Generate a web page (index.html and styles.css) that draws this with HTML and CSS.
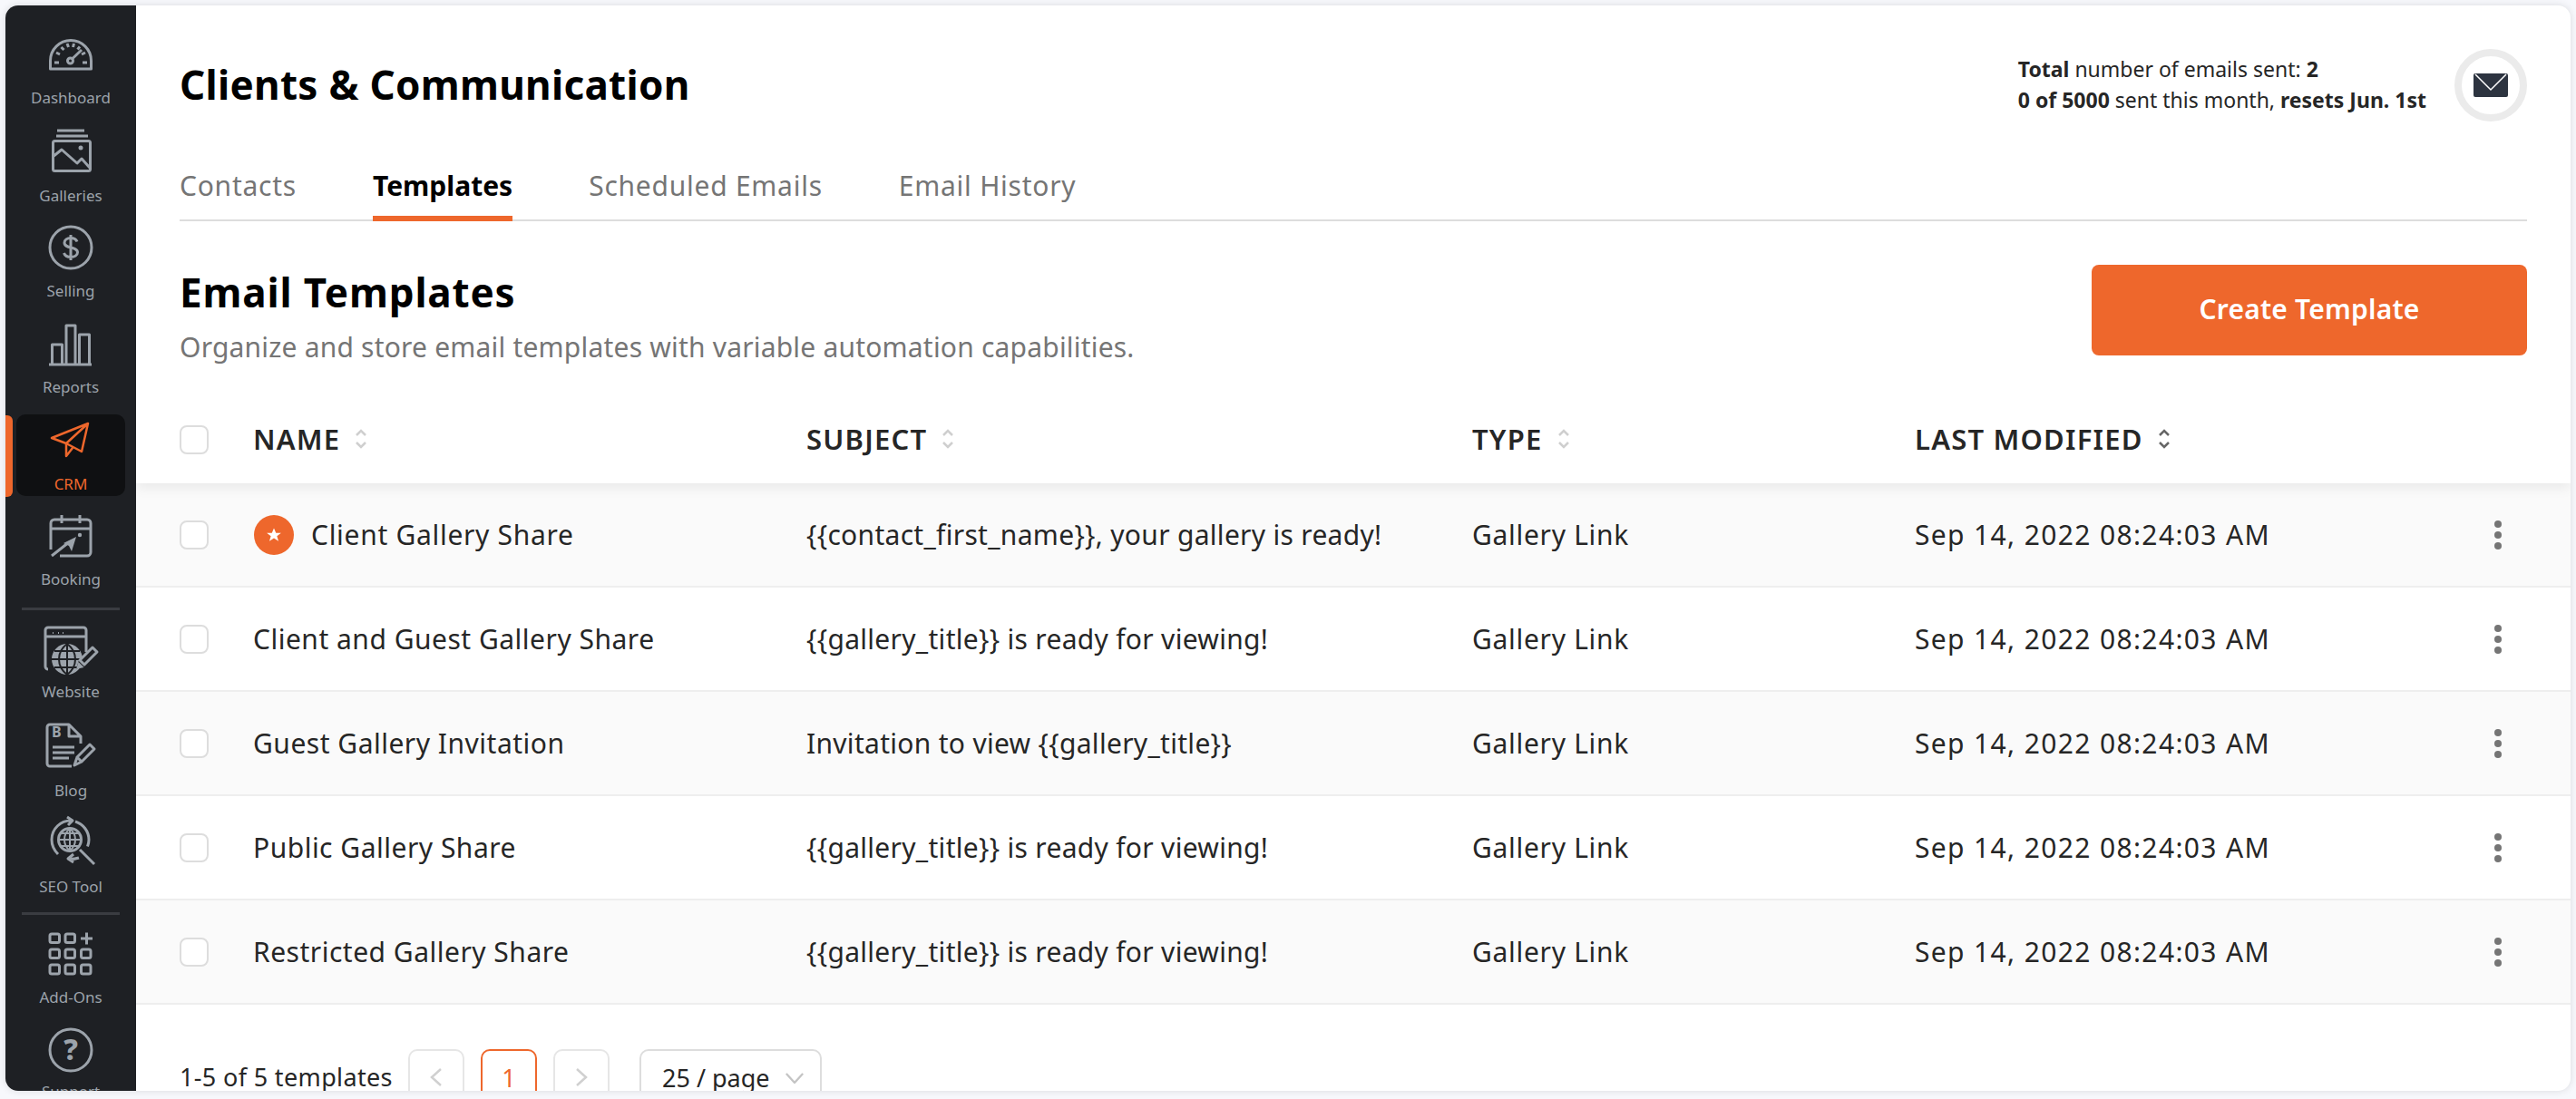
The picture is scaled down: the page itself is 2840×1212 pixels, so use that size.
FILE: index.html
```html
<!DOCTYPE html>
<html lang="en">
<head>
<meta charset="utf-8">
<title>Clients &amp; Communication</title>
<link rel="stylesheet" href="styles.css">
</head>
<body>
<div class="frame">
  <aside class="sidebar">
    <span class="active-bar"></span>
    <a class="nav nav-120">
      <svg class="ico" viewBox="0 0 60 60"><path d="M7.500 48V39a22.500 22.500 0 0 1 45 0v9z"/><path d="M12 41h5M43 41h5M14 30l4 2M19.500 24l3 3M26 20l1.500 4M33.500 20l-1 4M40 23.500l-2.500 3M46 30l-4 2"/><circle cx="29.500" cy="39" r="3"/><path d="M31.500 37L42 27"/></svg>
      <span class="nav-label">Dashboard</span>
    </a>
    <a class="nav nav-108">
      <svg class="ico" viewBox="0 0 60 60"><path d="M15 8h30M14 14h35"/><rect x="10.500" y="19.500" width="41" height="33" rx="2"/><path d="M10 37l10-8 17 15 5-5 9 10"/><circle class="solid" cx="41" cy="27" r="2.500"/></svg>
      <span class="nav-label">Galleries</span>
    </a>
    <a class="nav nav-105">
      <svg class="ico" viewBox="0 0 60 60"><circle cx="30" cy="32" r="23"/><path d="M37 25.500c-1-2.500-3.500-4-7-4-4 0-7 2.200-7 5.300 0 7 14.500 3.500 14.500 10.500 0 3.200-3.300 5.200-7.500 5.200-3.800 0-6.500-1.600-7.500-4.500M30 18v28"/></svg>
      <span class="nav-label">Selling</span>
    </a>
    <a class="nav nav-106">
      <svg class="ico" viewBox="0 0 60 60"><path d="M9.500 55V33h11v22M25 55V12h10v43M39.500 55V22h11v33M6 55h47"/></svg>
      <span class="nav-label">Reports</span>
    </a>
    <a class="nav nav-108 nav-active">
      <svg class="ico" viewBox="0 0 60 60"><path d="M49 13L9 29l16 6 17 9zM25 35L49 13M25 35v14l7-9"/></svg>
      <span class="nav-label">CRM</span>
    </a>
    <a class="nav nav-104">
      <svg class="ico" viewBox="0 0 60 60"><path d="M8 47V18a4 4 0 0 1 4-4h36a4 4 0 0 1 4 4v32a4 4 0 0 1-4 4H18M8 24h44M20 9v9M40 9v9M9 54l19-15"/><path class="solid" d="M36 33l-5 16-3-6-6-3z"/><circle class="solid" cx="40" cy="31" r="2.200"/></svg>
      <span class="nav-label">Booking</span>
    </a>
    <div class="nav-divider nav-divider-a"></div>
    <a class="nav nav-website">
      <svg class="ico" viewBox="0 0 60 60"><path d="M5 55h-0a3 3 0 0 1-3-3V12a3 3 0 0 1 3-3h39a3 3 0 0 1 3 3v24M2 19h45"/><path class="thin" d="M10 15h1M16 15h1M21 15h1"/><circle class="solid" cx="26" cy="44" r="17"/><path class="cut" d="M9 44h34M26 27v34M12 35h28M12 53h28M26 27c-12 9-12 25 0 34M26 27c12 9 12 25 0 34"/><path class="cut-fill" d="M36 55l3-10 15-15 6 6-15 15z"/><path class="solid" d="M36 55l2.500-8 6 6z"/><path class="pen" d="M40 45l14-14 5 5-14 14z"/></svg>
      <span class="nav-label">Website</span>
    </a>
    <a class="nav nav-109">
      <svg class="ico" viewBox="0 0 60 60"><path d="M31 53H7a3 3 0 0 1-3-3V10a3 3 0 0 1 3-3h21l13 13v8M28 7v13h13M10 32h24M10 38h24M10 44h18"/><path class="pen" d="M37 43l14-14 5 5-14 14zM37 43l-3 9 8-4"/><text class="blog-b" x="9" y="21">B</text></svg>
      <span class="nav-label">Blog</span>
    </a>
    <a class="nav nav-106">
      <svg class="ico" viewBox="0 0 60 60"><path d="M31 7a21 21 0 0 0-22 21c0 7 3 12 7 16M26 3l6 4-5 5M35 8c9 3 15 11 15 20 0 3-.5 5-1.500 7.500M39 48c-3 1-6 1.500-10 1.500l-1 0M33 44l-6 5 6 4M40 39l16 16"/><circle cx="29" cy="28" r="12.500"/><path class="thin" d="M17 28h24M29 16v24M19 21h20M19 35h20M29 16c-8 6-8 18 0 24M29 16c8 6 8 18 0 24"/></svg>
      <span class="nav-label">SEO Tool</span>
    </a>
    <div class="nav-divider nav-divider-b"></div>
    <a class="nav nav-addons">
      <svg class="ico" viewBox="0 0 60 60"><rect x="7" y="10" width="10.500" height="9.500" rx="2"/><rect x="24" y="10" width="10.500" height="9.500" rx="2"/><path d="M41 15h13M47.500 8.500v13"/><rect x="7" y="27" width="10.500" height="9.500" rx="2"/><rect x="24" y="27" width="10.500" height="9.500" rx="2"/><rect x="41.500" y="27" width="10.500" height="9.500" rx="2"/><rect x="7" y="44" width="10.500" height="10" rx="2"/><rect x="24" y="44" width="10.500" height="10" rx="2"/><rect x="41.500" y="44" width="10.500" height="10" rx="2"/></svg>
      <span class="nav-label">Add-Ons</span>
    </a>
    <a class="nav nav-104">
      <svg class="ico" viewBox="0 0 60 60"><circle cx="30" cy="34" r="23"/><text class="help-q" x="30" y="45">?</text></svg>
      <span class="nav-label">Support</span>
    </a>
  </aside>

  <main class="main">
    <div class="pad">
      <header class="top">
        <h1 class="title">Clients &amp; Communication</h1>
        <div class="stats">
          <div class="stats-text">
            <p><b>Total</b> number of emails sent: <b>2</b></p>
            <p><b>0 of 5000</b> sent this month, <b>resets Jun. 1st</b></p>
          </div>
          <div class="mail-ring">
            <svg class="mail" viewBox="0 0 38 26"><rect width="38" height="26" rx="2"/><path d="M2 1l17 17L36 1"/></svg>
          </div>
        </div>
      </header>
      <nav class="tabs">
        <a class="tab">Contacts</a>
        <a class="tab tab-on">Templates</a>
        <a class="tab">Scheduled Emails</a>
        <a class="tab">Email History</a>
      </nav>
      <section class="section">
        <div class="section-text">
          <h2 class="section-title">Email Templates</h2>
          <p class="section-sub">Organize and store email templates with variable automation capabilities.</p>
        </div>
        <button class="create">Create Template</button>
      </section>
    </div>

    <div class="table">
      <div class="row head">
        <span class="check"></span>
        <span class="th">NAME <svg class="sort" viewBox="0 0 14 24"><path d="M2 8l5-5 5 5M2 16l5 5 5-5"/></svg></span>
        <span class="th">SUBJECT <svg class="sort" viewBox="0 0 14 24"><path d="M2 8l5-5 5 5M2 16l5 5 5-5"/></svg></span>
        <span class="th">TYPE <svg class="sort" viewBox="0 0 14 24"><path d="M2 8l5-5 5 5M2 16l5 5 5-5"/></svg></span>
        <span class="th">LAST MODIFIED <svg class="sort sort-on" viewBox="0 0 14 24"><path d="M2 8l5-5 5 5M2 16l5 5 5-5"/></svg></span>
        <span></span>
      </div>
      <div class="row body-row">
        <span class="check"></span>
        <span class="name"><span class="badge"><svg class="star" viewBox="0 0 24 24"><path d="M12 2l3 7h7.500l-6 4.700 2.200 7.300L12 16.800 5.300 21l2.200-7.300-6-4.700H9z"/></svg></span>Client Gallery Share</span>
        <span class="subj">{{contact_first_name}}, your gallery is ready!</span>
        <span class="type">Gallery Link</span>
        <span class="date">Sep 14, 2022 08:24:03 AM</span>
        <span class="more"><i></i><i></i><i></i></span>
      </div>
      <div class="row body-row">
        <span class="check"></span>
        <span>Client and Guest Gallery Share</span>
        <span class="subj">{{gallery_title}} is ready for viewing!</span>
        <span class="type">Gallery Link</span>
        <span class="date">Sep 14, 2022 08:24:03 AM</span>
        <span class="more"><i></i><i></i><i></i></span>
      </div>
      <div class="row body-row">
        <span class="check"></span>
        <span>Guest Gallery Invitation</span>
        <span class="subj">Invitation to view {{gallery_title}}</span>
        <span class="type">Gallery Link</span>
        <span class="date">Sep 14, 2022 08:24:03 AM</span>
        <span class="more"><i></i><i></i><i></i></span>
      </div>
      <div class="row body-row">
        <span class="check"></span>
        <span>Public Gallery Share</span>
        <span class="subj">{{gallery_title}} is ready for viewing!</span>
        <span class="type">Gallery Link</span>
        <span class="date">Sep 14, 2022 08:24:03 AM</span>
        <span class="more"><i></i><i></i><i></i></span>
      </div>
      <div class="row body-row">
        <span class="check"></span>
        <span>Restricted Gallery Share</span>
        <span class="subj">{{gallery_title}} is ready for viewing!</span>
        <span class="type">Gallery Link</span>
        <span class="date">Sep 14, 2022 08:24:03 AM</span>
        <span class="more"><i></i><i></i><i></i></span>
      </div>
    </div>

    <footer class="pager">
      <span class="pager-count">1-5 of 5 templates</span>
      <span class="page-btn"><svg class="chev" viewBox="0 0 14 24"><path d="M12 3L2 12l10 9"/></svg></span>
      <span class="page-btn page-on">1</span>
      <span class="page-btn"><svg class="chev" viewBox="0 0 14 24"><path d="M2 3l10 9-10 9"/></svg></span>
      <span class="page-size">25 / page <svg class="caret" viewBox="0 0 24 14"><path d="M2 2l10 11L22 2"/></svg></span>
    </footer>
  </main>
</div>
</body>
</html>
```
FILE: styles.css
```css
* { box-sizing: border-box; }
html, body { margin: 0; height: 100%; }
body {
  background: #f7f8fc;
  font-family: "Noto Sans", "Lato", sans-serif;
  color: #262626;
  overflow: hidden;
}
p, h1, h2 { margin: 0; }

.frame {
  margin: 6px;
  width: 2828px;
  height: 1197px;
  display: flex;
  overflow: hidden;
  background: #fff;
  border-radius: 14px;
  box-shadow: 0 0 8px rgba(0, 0, 0, .12);
}

/* sidebar */
.sidebar {
  position: relative;
  flex: 0 0 144px;
  background: #1e2024;
  color: #9ca3ab;
  display: flex;
  flex-direction: column;
  align-items: center;
}
.active-bar {
  position: absolute;
  left: 0;
  top: 452px;
  width: 8px;
  height: 90px;
  background: #ee672c;
  border-radius: 0 6px 6px 0;
}
.nav {
  flex: none;
  width: 120px;
  display: flex;
  flex-direction: column;
  align-items: center;
  justify-content: flex-end;
  position: relative;
}
.nav-120 { height: 114px; }
.nav-108 { height: 108px; }
.nav-109 { height: 109px; }
.nav-106 { height: 106px; }
.nav-105 { height: 105px; }
.nav-104 { height: 104px; }
.nav-website { height: 124px; }
.nav-addons { height: 122px; }
.nav-divider { flex: none; width: 108px; height: 3px; background: #3a3c41; }
.nav-divider-a { position: relative; top: 19px; margin-bottom: -3px; }
.nav-divider-b { position: relative; top: 16px; margin-bottom: -3px; }
.ico {
  width: 60px;
  height: 60px;
  flex: none;
  margin-bottom: 8px;
  fill: none;
  stroke: currentColor;
  stroke-width: 3;
  stroke-linejoin: round;
  overflow: visible;
}
.ico .solid { fill: currentColor; stroke: none; }
.ico .thin { stroke-width: 2; }
.ico .cut { stroke: #1e2024; stroke-width: 2; }
.ico .cut-fill { fill: #1e2024; stroke: none; }
.ico .pen { stroke-width: 3; }
.blog-b { font: 700 16px "Noto Sans", sans-serif; fill: currentColor; stroke: none; }
.help-q { font: 800 32px "Noto Sans", sans-serif; fill: currentColor; stroke: none; text-anchor: middle; }
.nav-label { height: 24px; line-height: 24px; font-size: 17px; white-space: nowrap; }
.nav-active { color: #ee672c; background: #0f1012; border-radius: 10px; }
.nav-active .ico { stroke-width: 2.5; }
.nav-active { height: 90px; margin-top: 18px; padding-bottom: 1px; }
.nav-active .ico { position: absolute; top: -3px; left: 30px; }

/* main */
.main { flex: 1; min-width: 0; display: flex; flex-direction: column; }
.pad { padding: 0 48px; }
.top {
  height: 144px;
  display: flex;
  justify-content: space-between;
  align-items: flex-start;
}
.title { font-size: 44px; font-weight: 700; color: #000; line-height: 60px; margin-top: 57px; letter-spacing: .3px; }
.stats { display: flex; align-items: flex-start; margin-top: 48px; }
.stats-text { font-size: 23px; line-height: 34px; margin: 5px 31px 0 0; color: #262626; }
.mail-ring {
  width: 80px; height: 80px;
  border: 8px solid #ebebeb;
  border-radius: 50%;
  display: flex; align-items: center; justify-content: center;
}
.mail { width: 38px; height: 26px; }
.mail rect { fill: #2d3440; }
.mail path { fill: none; stroke: #fff; stroke-width: 1.5; }

.tabs {
  height: 94px;
  display: flex;
  align-items: flex-end;
  border-bottom: 2px solid #ddd;
}
.tab {
  height: 64px;
  line-height: 50px;
  font-size: 30px;
  color: #757575;
  margin-bottom: -2px;
  margin-right: 84px;
  white-space: nowrap;
  letter-spacing: .75px;
}
.tab-on { color: #000; font-weight: 700; border-bottom: 6px solid #ee672c; letter-spacing: 0; }
.section {
  display: flex;
  justify-content: space-between;
  align-items: flex-start;
  margin-top: 48px;
  height: 100px;
}
.section-text { padding-top: 3px; }
.section-title { font-size: 44px; font-weight: 700; color: #000; line-height: 54px; letter-spacing: .85px; }
.section-sub { font-size: 30px; color: #757575; line-height: 40px; margin-top: 14px; white-space: nowrap; letter-spacing: .2px; }
.create {
  width: 480px;
  height: 100px;
  border: 0;
  border-radius: 8px;
  padding: 0 0 3px;
  background: #ee672c;
  color: #fff;
  font: 600 30px "Noto Sans", sans-serif;
  letter-spacing: .2px;
}

/* table */
.table { margin-top: 45px; }
.row {
  display: grid;
  grid-template-columns: 81px 610px 734px 488px 1fr auto;
  align-items: center;
  padding-left: 48px;
  font-size: 30px;
  white-space: nowrap;
  letter-spacing: .5px;
}
.head {
  height: 96px;
  position: relative;
  z-index: 1;
  background: #fff;
  box-shadow: 0 4px 14px rgba(0, 0, 0, .08);
  clip-path: inset(0 0 -30px 0);
}
.th { font-size: 31px; font-weight: 600; display: flex; align-items: center; gap: 16px; letter-spacing: 1.2px; padding-bottom: 3px; }
.sort { width: 14px; height: 24px; fill: none; stroke: #cfcfcf; stroke-width: 2.5; }
.sort-on { stroke: #666; }
.body-row { height: 115px; border-bottom: 2px solid #eee; }
.body-row:nth-child(even) { background: #fafafa; }
.subj { letter-spacing: .3px; }
.type { letter-spacing: .7px; }
.date { letter-spacing: 1.36px; }
.check {
  width: 32px; height: 32px;
  border: 2px solid #ddd;
  border-radius: 8px;
  background: #fff;
}
.name { display: flex; align-items: center; gap: 19px; letter-spacing: .7px; }
.badge {
  width: 44px; height: 44px;
  margin-left: 1px;
  border-radius: 50%;
  background: #ee672c;
  display: flex; align-items: center; justify-content: center;
}
.star { width: 18px; height: 18px; fill: #fff; }
.more { margin-right: 76px; display: flex; flex-direction: column; gap: 4px; }
.more i { width: 8px; height: 8px; border-radius: 50%; background: #757575; }

/* pager */
.pager {
  padding: 49px 0 0 48px;
  display: flex;
  align-items: flex-start;
  font-size: 27px;
}
.pager-count { line-height: 62px; width: 252px; white-space: nowrap; letter-spacing: .35px; }
.page-btn {
  width: 62px; height: 62px;
  border: 2px solid #e6e6e6;
  border-radius: 10px;
  margin-right: 18px;
  display: flex; align-items: center; justify-content: center;
  color: #ee672c;
}
.page-on { border-color: #ee672c; }
.chev { width: 14px; height: 24px; fill: none; stroke: #d0d0d0; stroke-width: 2.5; }
.page-size {
  margin-left: 15px;
  width: 201px; height: 62px;
  border: 2px solid #ddd;
  border-radius: 10px;
  display: flex; align-items: center;
  gap: 16px;
  padding-left: 23px;
  white-space: nowrap;
}
.caret { width: 22px; height: 13px; fill: none; stroke: #c4c4c4; stroke-width: 2.5; }
```
